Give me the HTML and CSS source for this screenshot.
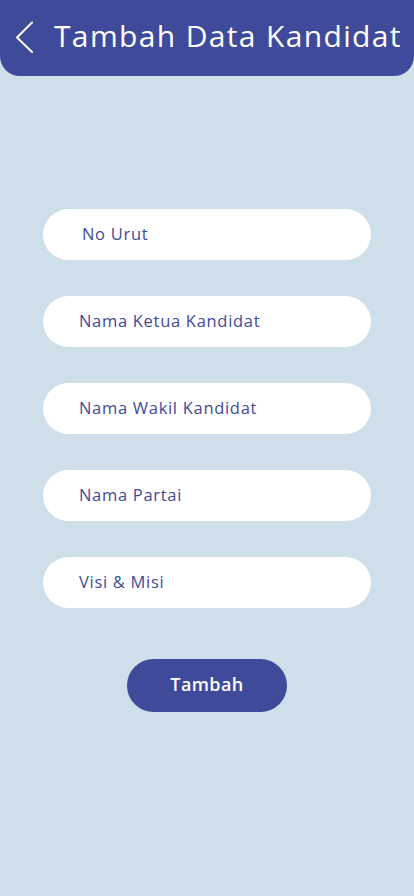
FILE: index.html
```html
<!DOCTYPE html>
<html lang="id">
<head>
<meta charset="utf-8">
<title>Tambah Data Kandidat</title>
<link rel="stylesheet" href="styles.css">
</head>
<body>
<header class="topbar">
  <svg class="back" width="20" height="32" viewBox="0 0 20 32" aria-hidden="true">
    <path d="M18 1.5 L3 16.5 L18 31" fill="none" stroke="#ffffff" stroke-width="2" stroke-linecap="round" stroke-linejoin="round"/>
  </svg>
  <h1 class="title">Tambah Data Kandidat</h1>
</header>
<main class="form">
  <div class="field"><span class="label first">No Urut</span></div>
  <div class="field"><span class="label">Nama Ketua Kandidat</span></div>
  <div class="field"><span class="label">Nama Wakil Kandidat</span></div>
  <div class="field"><span class="label">Nama Partai</span></div>
  <div class="field"><span class="label">Visi &amp; Misi</span></div>
  <button class="submit" type="button">Tambah</button>
</main>
</body>
</html>
```
FILE: styles.css
```css
html, body {
  margin: 0;
  padding: 0;
}
body {
  width: 414px;
  height: 896px;
  background: #cfdfe9;
  font-family: "Open Sans", "Noto Sans", sans-serif;
  overflow: hidden;
}
.topbar {
  height: 76px;
  background: #3f4b9a;
  border-radius: 0 0 20px 20px;
  display: flex;
  align-items: center;
  padding: 0 0 0 14px;
  gap: 20px;
  box-sizing: border-box;
}
.back {
  flex: none;
  margin-top: -2px;
}
.title {
  margin: 0;
  color: #ffffff;
  font-family: "Open Sans", sans-serif;
  font-weight: 400;
  font-size: 30px;
  letter-spacing: 1.35px;
  margin-top: -5px;
  white-space: nowrap;
}
.form {
  display: flex;
  flex-direction: column;
  align-items: center;
  padding-top: 133px;
  gap: 36px;
}
.field {
  width: 328px;
  height: 51px;
  background: #ffffff;
  border-radius: 26px;
  display: flex;
  align-items: center;
  padding-left: 36px;
  box-sizing: border-box;
}
.label {
  color: #3f4b9a;
  font-size: 16.5px;
  letter-spacing: 0.7px;
  margin-top: -2px;
}
.label.first {
  margin-left: 3px;
}
.submit {
  margin-top: 15px;
  width: 160px;
  height: 53px;
  border: none;
  border-radius: 27px;
  background: #3f4b9a;
  color: #ffffff;
  font-family: "Open Sans", sans-serif;
  font-weight: 600;
  font-size: 18px;
  letter-spacing: 0.4px;
  padding: 0 0 4px 0;
}
```
